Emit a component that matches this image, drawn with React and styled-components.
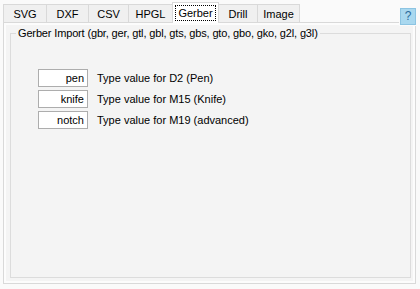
import * as React from "react"
import styled, { createGlobalStyle } from "styled-components"

const tabs = [
  { title: "SVG", width: 44 },
  { title: "DXF", width: 43 },
  { title: "CSV", width: 41 },
  { title: "HPGL", width: 45 },
  { title: "Gerber", width: 47 },
  { title: "Drill", width: 40 },
  { title: "Image", width: 43 },
]

const fields = [
  { value: "pen", label: "Type value for D2 (Pen)" },
  { value: "knife", label: "Type value for M15 (Knife)" },
  { value: "notch", label: "Type value for M19 (advanced)" },
]

const GlobalStyle = createGlobalStyle`
  html, body {
    margin: 0;
    background: #fafafa;
    font-family: "Liberation Sans", Arial, sans-serif;
    font-size: 11px;
    color: #000;
  }
`

export default function App() {
  return (
    <>
      <GlobalStyle />
      <Window>
        <Header>
          <TabStrip>
            {tabs.map((tab, index) => (
              <Tab
                key={index}
                $width={tab.width}
                $selected={tab.title === "Gerber"}
              >
                {tab.title === "Gerber" ? <Focus>{tab.title}</Focus> : tab.title}
              </Tab>
            ))}
          </TabStrip>
          <HelpButton>?</HelpButton>
        </Header>
        <Panel>
          <Page>
            <Group>
              <Legend>Gerber Import (gbr, ger, gtl, gbl, gts, gbs, gto, gbo, gko, g2l, g3l)</Legend>
              <Rows>
                {fields.map((field, index) => (
                  <Row key={index}>
                    <ValueBox>{field.value}</ValueBox>
                    <Label>{field.label}</Label>
                  </Row>
                ))}
              </Rows>
            </Group>
          </Page>
        </Panel>
      </Window>
    </>
  )
}

const Window = styled.div`
  width: 420px;
  height: 289px;
  box-sizing: border-box;
  padding-top: 2px;
  display: flex;
  flex-direction: column;
`

const Header = styled.div`
  display: flex;
  align-items: flex-end;
  height: 20px;
  padding: 0 4px 0 3px;
`

const TabStrip = styled.div`
  display: flex;
  align-items: flex-end;
`

const Tab = styled.div`
  box-sizing: border-box;
  width: ${p => p.$width}px;
  height: ${p => (p.$selected ? 21 : 18)}px;
  margin-bottom: ${p => (p.$selected ? -1 : 0)}px;
  padding-top: ${p => (p.$selected ? 0 : 1)}px;
  border: 1px solid #d9d9d9;
  border-bottom: none;
  background: ${p => (p.$selected ? "#ffffff" : "#f0f0f0")};
  position: relative;
  z-index: ${p => (p.$selected ? 2 : 0)};
  display: flex;
  align-items: center;
  justify-content: center;

  & + & {
    margin-left: -1px;
  }
`

const Focus = styled.span`
  outline: 1px dotted #000;
  padding: 1px 2px 1px 2px;
  line-height: 12px;
`

const HelpButton = styled.div`
  margin-left: auto;
  align-self: flex-start;
  margin-top: 6px;
  margin-bottom: -2px;
  width: 16px;
  height: 17px;
  box-sizing: border-box;
  border: 1px solid #8cc4e2;
  background: #a9d8ef;
  color: #2c6b9c;
  font-size: 12px;
  line-height: 15px;
  text-align: center;
  position: relative;
  z-index: 2;
  box-shadow: 0 0 0 1px #fafafa;
`

const Panel = styled.div`
  box-sizing: border-box;
  height: 262px;
  margin: 0 4px 0 3px;
  border: 1px solid #d9d9d9;
  background: #fcfcfc;
  padding: 2px;
  display: flex;
`

const Page = styled.div`
  flex: 1;
  display: flex;
  background: #f4f4f4;
  padding: 2px 2px 3px 4px;
`

const Group = styled.fieldset`
  flex: 1;
  margin: 0;
  min-width: 0;
  border: 1px solid #dcdcdc;
  padding: 0 8px 0 5px;
`

const Legend = styled.legend`
  padding: 0 2px;
  line-height: 13px;
  letter-spacing: -0.15px;
`

const Rows = styled.div`
  display: flex;
  flex-direction: column;
  gap: 3px;
  margin-top: 29px;
  padding-left: 22px;
`

const Row = styled.div`
  display: flex;
  align-items: center;
  gap: 9px;
`

const ValueBox = styled.div`
  box-sizing: border-box;
  width: 50px;
  height: 18px;
  border: 1px solid #adadad;
  background: #fff;
  text-align: right;
  padding-right: 3px;
  line-height: 16px;
`

const Label = styled.span`
  line-height: 13px;
`
